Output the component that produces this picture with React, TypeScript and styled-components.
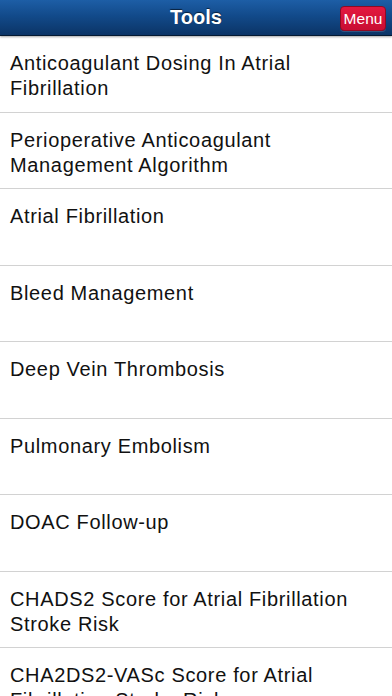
import React from "react";
import styled, { createGlobalStyle } from "styled-components";

const Global = createGlobalStyle`
  html, body { margin: 0; padding: 0; background: #ffffff; }
  body { font-family: "Liberation Sans", Arial, sans-serif; overflow: hidden; }
`;

const Page = styled.div`
  width: 392px;
  height: 696px;
  overflow: hidden;
  display: flex;
  flex-direction: column;
  background: #ffffff;
`;

const Header = styled.header`
  position: relative;
  height: 35px;
  flex: 0 0 auto;
  display: flex;
  align-items: center;
  justify-content: center;
  background: linear-gradient(#1d5ea6 0%, #124a8a 45%, #0b3466 100%);
  border-bottom: 1px solid #041a33;
  box-shadow: 0 1px 2px rgba(0, 0, 0, 0.35);
  z-index: 1;
`;

const Title = styled.h1`
  margin: 0;
  font-size: 20px;
  font-weight: bold;
  color: #ffffff;
  text-shadow: 0 -1px 1px rgba(0, 0, 0, 0.6);
`;

const MenuButton = styled.button`
  position: absolute;
  right: 6px;
  top: 6px;
  width: 46px;
  height: 25px;
  padding: 0;
  border: 1px solid #8e0a24;
  border-radius: 4px;
  background: linear-gradient(#e3183f, #c80d33);
  color: #ffffff;
  font-family: "Liberation Sans", Arial, sans-serif;
  font-size: 15.5px;
  line-height: 23px;
  box-shadow: 0 1px 0 rgba(255, 255, 255, 0.15);
`;

const List = styled.ul`
  list-style: none;
  margin: 0;
  padding: 0;
`;

const Row = styled.li`
  box-sizing: border-box;
  height: 76.5px;
  padding: 15px 10px 0 10px;
  border-bottom: 1px solid #d2d2d2;
  font-size: 20px;
  letter-spacing: 0.65px;
  line-height: 25px;
  color: #111111;
`;

const items = [
  "Anticoagulant Dosing In Atrial Fibrillation",
  "Perioperative Anticoagulant Management Algorithm",
  "Atrial Fibrillation",
  "Bleed Management",
  "Deep Vein Thrombosis",
  "Pulmonary Embolism",
  "DOAC Follow-up",
  "CHADS2 Score for Atrial Fibrillation Stroke Risk",
  "CHA2DS2-VASc Score for Atrial Fibrillation Stroke Risk",
];

export default function App() {
  return (
    <>
      <Global />
      <Page>
        <Header>
          <Title>Tools</Title>
          <MenuButton>Menu</MenuButton>
        </Header>
        <List>
          {items.map((t) => (
            <Row key={t}>{t}</Row>
          ))}
        </List>
      </Page>
    </>
  );
}
